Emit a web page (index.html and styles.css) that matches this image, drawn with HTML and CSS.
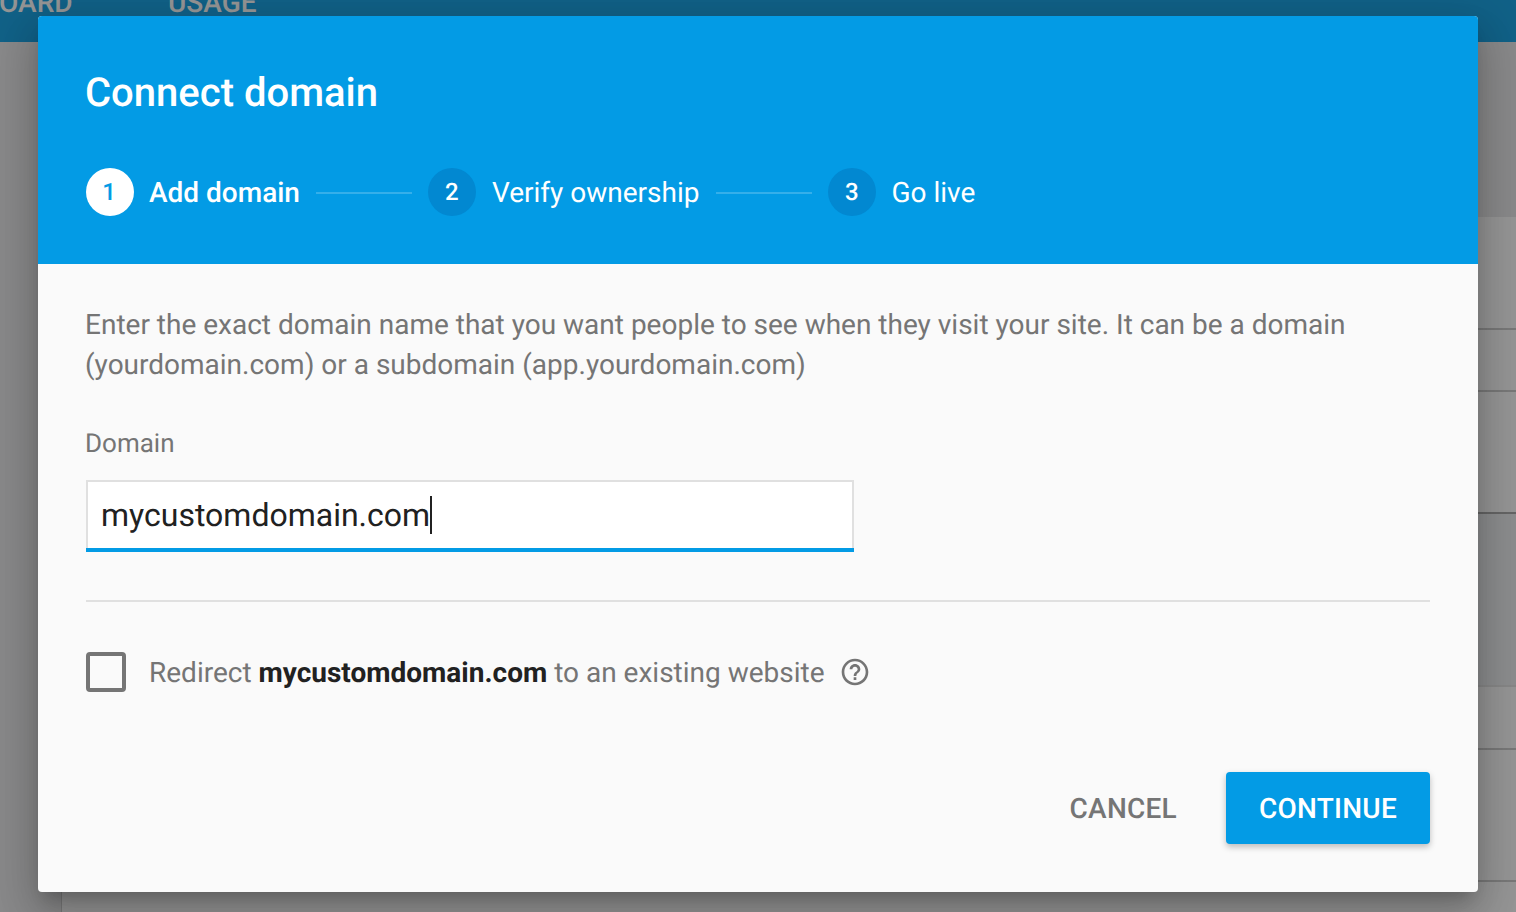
FILE: index.html
```html
<!DOCTYPE html>
<html lang="en">
<head>
<meta charset="utf-8">
<title>Connect domain</title>
<link rel="stylesheet" href="styles.css">
</head>
<body>
<div class="page">
  <header class="topbar">
    <span class="tab tab-first">DASHBOARD</span>
    <span class="tab">USAGE</span>
  </header>
  <main class="backdrop-content">
    <div class="spacer s1"></div>
    <div class="row r1"></div>
    <div class="row r2"></div>
    <div class="row r3"></div>
    <div class="row r4"></div>
    <div class="row r5"></div>
    <div class="row r6"></div>
    <div class="row r7"></div>
  </main>
  <div class="scrim"></div>
  <section class="dialog">
    <div class="dialog-head">
      <h1 class="dialog-title">Connect domain</h1>
      <div class="stepper">
        <span class="step-num active">1</span>
        <span class="step-label strong">Add domain</span>
        <span class="step-line"></span>
        <span class="step-num">2</span>
        <span class="step-label">Verify ownership</span>
        <span class="step-line step-line-wide"></span>
        <span class="step-num">3</span>
        <span class="step-label step-label-last">Go live</span>
      </div>
    </div>
    <div class="dialog-body">
      <p class="intro">Enter the exact domain name that you want people to see when they visit your site. It can be a domain (yourdomain.com) or a subdomain (app.yourdomain.com)</p>
      <div class="field-label">Domain</div>
      <div class="input"><span class="input-text">mycustomdomain.com</span><span class="caret"></span></div>
      <div class="divider"></div>
      <div class="redirect">
        <span class="checkbox"></span>
        <span class="redirect-text">Redirect <b>mycustomdomain.com</b> to an existing website</span>
        <svg class="help" width="32" height="32" viewBox="0 0 24 24"><path fill="#757575" d="M11 18h2v-2h-2v2zm1-16C6.48 2 2 6.48 2 12s4.48 10 10 10 10-4.48 10-10S17.520 2 12 2zm0 18c-4.410 0-8-3.590-8-8s3.590-8 8-8 8 3.590 8 8-3.590 8-8 8zm0-14c-2.210 0-4 1.790-4 4h2c0-1.100.9-2 2-2s2 .9 2 2c0 2-3 1.750-3 5h2c0-2.250 3-2.500 3-5 0-2.210-1.790-4-4-4z"/></svg>
      </div>
      <div class="actions">
        <span class="btn btn-cancel">CANCEL</span>
        <span class="btn btn-primary">CONTINUE</span>
      </div>
    </div>
  </section>
</div>
</body>
</html>
```
FILE: styles.css
```css
* { box-sizing: border-box; }
html, body { margin: 0; height: 100%; }
body { font-family: Roboto, "Liberation Sans", sans-serif; overflow: hidden; text-rendering: geometricPrecision; }
.page { position: relative; width: 1516px; height: 912px; overflow: hidden; background: #fafafa; }
.topbar { height: 42px; background: #039be5; display: flex; align-items: flex-end; padding: 0 0 25px 0; color: #fff; font-size: 28px; font-weight: 500; line-height: 28px; }
.tab { display: block; }
.tab-first { margin-left: -92px; width: 260px; }
.backdrop-content { display: block; height: 870px; background: #e8e9ea; }
.spacer.s1 { height: 175px; }
.row { margin-left: 61px; border-left: 1px solid #ccc; border-bottom: 2px solid #c8c8c8; background: #fff; }
.r1 { height: 113px; }
.r2 { height: 62px; }
.r3 { height: 122px; border-bottom-color: #a4a4a4; }
.r4 { height: 173px; background: #eef0f2; border-bottom-color: #e4e4e4; }
.r5 { height: 63px; }
.r6 { height: 132px; }
.r7 { height: 40px; }
.scrim { position: absolute; inset: 0; background: rgba(33, 33, 33, .48); }
.dialog { position: absolute; left: 38px; top: 16px; width: 1440px; height: 876px; background: #fafafa; border-radius: 4px; overflow: hidden; box-shadow: 0 11px 15px -7px rgba(0,0,0,.2), 0 24px 38px 3px rgba(0,0,0,.14), 0 9px 46px 8px rgba(0,0,0,.12); }
.dialog-head { height: 248px; background: #039be5; color: #fff; padding: 48px 48px 0; }
.dialog-title { margin: 0 0 0 -1px; font-size: 40px; font-weight: 500; line-height: 58px; height: 104px; }
.stepper { display: flex; align-items: center; height: 48px; font-size: 28px; }
.step-num { width: 48px; height: 48px; padding: 0 .5px 0 0; border-radius: 50%; background: #0288d1; color: #fff; display: flex; align-items: center; justify-content: center; font-size: 24px; font-weight: 500; }
.step-num.active { background: #fff; color: #039be5; padding-right: 2px; }
.step-label { margin-left: 16px; white-space: nowrap; }
.step-label.strong { font-weight: 500; margin-left: 15px; }
.step-label-last { margin-left: 15.5px; }
.step-line { width: 96px; height: 2px; margin: 2px 16px 0; background: rgba(255,255,255,.2); }
.step-line-wide { margin-left: 16.5px; }
.dialog-body { padding: 40px 48px 0; color: #757575; }
.intro { margin: 1px 0 -1px -1px; font-size: 28px; line-height: 40px; width: 1344px; }
.field-label { margin: 40px 0 0 -1px; font-size: 26px; line-height: 40px; }
.input { margin-top: 16px; width: 768px; height: 72px; padding: 0 15px 2px; background: #fff; box-shadow: inset 0 -4px 0 #039be5, inset 0 2px 0 #e0e0e0, inset 2px 0 0 #e0e0e0, inset -2px 0 0 #e0e0e0; display: flex; align-items: center; color: #212121; font-size: 32px; }
.caret { width: 2px; height: 38px; background: #212121; }
.divider { margin-top: 48px; height: 2px; background: #e0e0e0; }
.redirect { display: flex; align-items: center; margin-top: 50px; height: 40px; font-size: 28px; }
.checkbox { width: 40px; height: 40px; border: 4px solid #757575; border-radius: 4px; }
.redirect-text { margin-left: 23px; }
.redirect-text b { color: #212121; font-weight: 700; }
.help { margin-left: 14px; }
.actions { display: flex; justify-content: flex-end; align-items: center; margin-top: 80px; }
.btn { display: flex; align-items: center; justify-content: center; height: 72px; font-size: 28px; font-weight: 500; letter-spacing: .25px; border-radius: 4px; }
.btn-cancel { color: #757575; margin-right: 49px; }
.btn-primary { width: 204px; background: #039be5; color: #fff; box-shadow: 0 3px 6px rgba(0,0,0,.25); }
```
